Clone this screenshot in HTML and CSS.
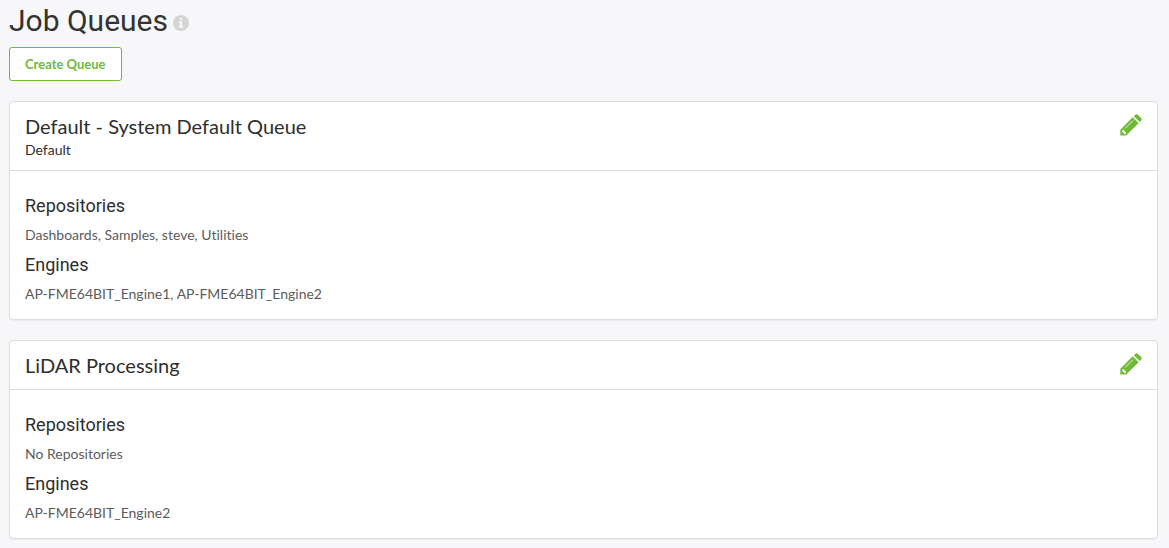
FILE: index.html
```html
<!DOCTYPE html>
<html lang="en">
<head>
<meta charset="utf-8">
<title>Job Queues</title>
<link rel="stylesheet" href="styles.css">
</head>
<body>
<main class="page">
  <header class="page-head">
    <h1 class="page-title">Job Queues</h1>
    <a class="info" href="#" aria-label="Help"><svg class="info-icon" viewBox="0 0 16 16" aria-hidden="true"><circle cx="8" cy="8" r="8" fill="#d4d4d4"/><path fill="#f7f7fa" d="M6.700 3h2.500v2H6.700zM5.700 6.300h3.500v4.700h1.100v1.700H5.700V11h1.100V8H5.700z"/></svg></a>
  </header>
  <button class="create" type="button">Create Queue</button>
  <section class="card">
    <header class="card-head">
      <div>
        <h2 class="card-title">Default - System Default Queue</h2>
        <p class="card-sub">Default</p>
      </div>
      <button class="edit" type="button" aria-label="Edit"><svg class="edit-icon" viewBox="0 0 22 22" aria-hidden="true"><path fill="#6fba36" d="M12.700 3.300l5.900 5.900L6.200 21.600H.3v-5.900zM13.800 2.200L15.400.7q1.200-1 2.400 0l3.400 3.400q1.100 1.200 0 2.400l-1.500 1.600z"/><path fill="#fff" d="M2 17.100l1-1 1.300.3.200 1.300 1.300.2.300 1.300-1 1H4.100l-.1-1.300-1.300-.1z"/><path fill="none" stroke="#fff" stroke-width=".8" d="M5.200 14.400l7.700-7.700"/></svg></button>
    </header>
    <div class="card-body">
      <h3 class="label">Repositories</h3>
      <p class="value">Dashboards, Samples, steve, Utilities</p>
      <h3 class="label">Engines</h3>
      <p class="value">AP-FME64BIT_Engine1, AP-FME64BIT_Engine2</p>
    </div>
  </section>
  <section class="card">
    <header class="card-head">
      <h2 class="card-title">LiDAR Processing</h2>
      <button class="edit" type="button" aria-label="Edit"><svg class="edit-icon" viewBox="0 0 22 22" aria-hidden="true"><path fill="#6fba36" d="M12.700 3.300l5.900 5.900L6.200 21.600H.3v-5.900zM13.800 2.200L15.400.7q1.200-1 2.400 0l3.400 3.400q1.100 1.200 0 2.400l-1.500 1.600z"/><path fill="#fff" d="M2 17.100l1-1 1.300.3.200 1.300 1.300.2.300 1.300-1 1H4.100l-.1-1.300-1.300-.1z"/><path fill="none" stroke="#fff" stroke-width=".8" d="M5.200 14.400l7.700-7.700"/></svg></button>
    </header>
    <div class="card-body">
      <h3 class="label">Repositories</h3>
      <p class="value">No Repositories</p>
      <h3 class="label">Engines</h3>
      <p class="value">AP-FME64BIT_Engine2</p>
    </div>
  </section>
</main>
</body>
</html>
```
FILE: styles.css
```css
* { box-sizing: border-box; }
body { margin: 0; background: #f7f7fa; color: #2e2e2e; font-family: Lato, sans-serif; font-size: 14px; line-height: 20px; font-variant-ligatures: none; }
h1, h2, h3, p { margin: 0; font-weight: 400; }
.page { padding: 0 11px 9px 9px; }
.page-head { display: flex; align-items: center; gap: 5px; padding-bottom: 5px; }
.page-title { color: #333; font-family: Roboto, sans-serif; font-size: 30px; line-height: 42px; }
.info { display: flex; padding-top: 3px; }
.info-icon { width: 16px; height: 16px; }
.create { display: block; height: 34px; padding: 0 15px; border: 1px solid #6fba36; border-radius: 3px; background: #fff; color: #6fba36; font: 700 13px/20px Lato, sans-serif; }
.card { margin-top: 20px; border: 1px solid #ddd; border-radius: 4px; background: #fff; box-shadow: 0 1px 1px rgba(0, 0, 0, 0.05); }
.card-head { display: flex; justify-content: space-between; align-items: flex-start; padding: 10px 15px; border-bottom: 1px solid #ddd; }
.card-title { font-size: 20px; line-height: 28px; }
.card-sub { line-height: 20px; }
.edit { display: flex; margin: 0; padding: 2px 0 0; border: 0; background: none; }
.edit-icon { width: 22px; height: 22px; }
.card-body { padding: 25px 15px 5px; }
.label { font-family: Roboto, sans-serif; font-size: 18px; line-height: 20px; }
.value { padding: 9px 0 10px; color: #5c5c5c; }
```
